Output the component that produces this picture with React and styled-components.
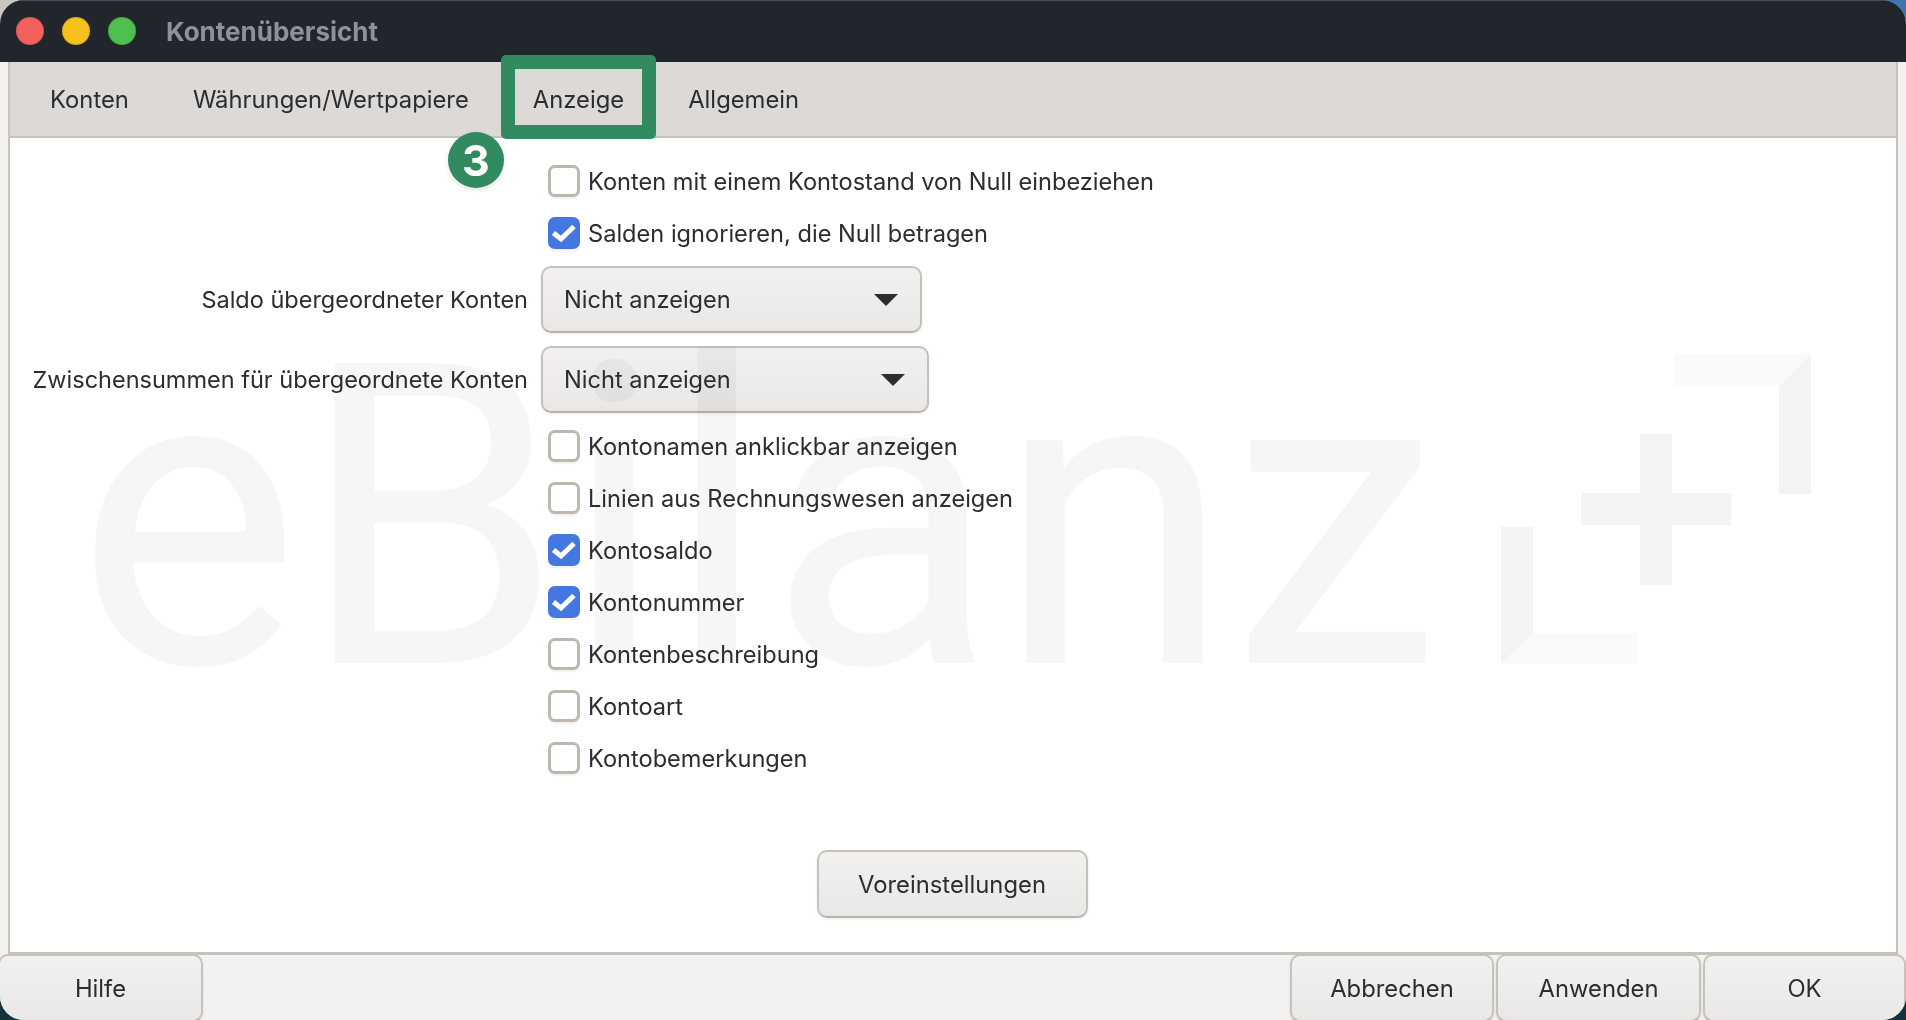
import React from "react";
import styled, { createGlobalStyle } from "styled-components";

const GlobalStyle = createGlobalStyle`
  html, body {
    margin: 0;
    padding: 0;
    background: #16323c;
    font-family: "Inter", "Liberation Sans", sans-serif;
    overflow: hidden;
  }
`;

const Desktop = styled.div`
  width: 1906px;
  height: 1020px;
  background:
    linear-gradient(to right, #c9c7c4 50%, #3d75b0 50%) top / 100% 50% no-repeat,
    #16323c;
`;

const Window = styled.div`
  display: flex;
  flex-direction: column;
  height: 100%;
  background: #f3f2f0;
  border-radius: 24px;
  overflow: hidden;
`;

const TitleBar = styled.div`
  display: flex;
  align-items: center;
  flex: 0 0 62px;
  padding-left: 16px;
  background: #20262b;
  box-shadow: inset 0 1px 0 #4a4f54;
`;

const Light = styled.span`
  width: 28px;
  height: 28px;
  margin-right: 18px;
  border-radius: 50%;
  background: ${p => p.color};
  box-shadow: inset 0 0 0 1px rgba(0, 0, 0, 0.12);
`;

const Title = styled.div`
  margin-left: 12px;
  font-size: 26px;
  font-weight: 700;
  color: #8e9195;
`;

const Panel = styled.div`
  position: relative;
  display: flex;
  flex-direction: column;
  flex: 0 0 893px;
  box-sizing: border-box;
  margin: 0 8px;
  background: #fff;
  border-bottom: 3px solid #c6c1ba;
  border-left: 2px solid #c6c1ba;
  border-right: 2px solid #c6c1ba;
`;

const TabBar = styled.div`
  display: flex;
  flex: 0 0 76px;
  box-sizing: border-box;
  padding-left: 8px;
  background: #dcd9d6;
  border-bottom: 2px solid #c6c1ba;
`;

const Tab = styled.div`
  position: relative;
  display: flex;
  align-items: center;
  padding: 0 32px;
  font-size: 23.8px;
  color: #2a2e30;
`;

const Highlight = styled.div`
  position: absolute;
  top: -7px;
  left: 0;
  right: 0;
  bottom: -3px;
  border: 14px solid #318a60;
  border-radius: 5px;
`;

const Badge = styled.div`
  position: absolute;
  top: 70px;
  left: -53px;
  display: flex;
  align-items: center;
  justify-content: center;
  width: 56px;
  height: 56px;
  border-radius: 50%;
  background: #318a60;
  box-shadow: 0 2px 4px rgba(0, 0, 0, 0.12);
  color: #fff;
  font-size: 43px;
  font-weight: 700;
`;

const Watermark = styled.div`
  position: absolute;
  top: 246px;
  left: 66px;
  font-family: "Roboto", sans-serif;
  font-size: 422px;
  font-weight: 400;
  line-height: 1;
  color: #f6f6f6;
  white-space: nowrap;
  user-select: none;
`;

const WatermarkMark = styled.svg`
  position: absolute;
  top: 288px;
  left: 1485px;
`;

const Form = styled.div`
  position: relative;
  display: flex;
  flex-direction: column;
  padding-top: 17px;
`;

const CheckRow = styled.label`
  display: flex;
  align-items: center;
  gap: 8px;
  height: 52px;
  margin-left: 538px;
  font-size: 23.6px;
  color: #2a2e30;
`;

const Box = styled.span`
  display: flex;
  align-items: center;
  justify-content: center;
  box-sizing: border-box;
  width: 32px;
  height: 32px;
  border: 3px solid ${p => (p.checked ? "#4477e0" : "#bdb7ae")};
  border-radius: 7px;
  background: ${p => (p.checked ? "#4477e0" : "#fff")};
  box-shadow: 0 2px 2px rgba(0, 0, 0, 0.06);
`;

const SelectRow = styled.div`
  display: grid;
  grid-template-columns: 518px auto;
  column-gap: 13px;
  justify-content: start;
  align-items: center;
  margin-top: ${p => p.gap}px;
  margin-bottom: ${p => p.after || 0}px;
`;

const SelectLabel = styled.div`
  font-size: 23.5px;
  color: #2a2e30;
  text-align: right;
`;

const SelectBox = styled.div`
  display: flex;
  align-items: center;
  justify-content: space-between;
  box-sizing: border-box;
  width: ${p => p.width}px;
  height: 67px;
  padding: 0 22px 0 21px;
  border: 2px solid #c6c1ba;
  border-bottom-color: #b9b3aa;
  border-radius: 10px;
  background: linear-gradient(#f2f1ef, #e9e8e6);
  box-shadow: 0 1px 3px rgba(0, 0, 0, 0.08);
  mix-blend-mode: multiply;
  font-size: 23.6px;
  color: #2a2e30;
`;

const Arrow = styled.span`
  width: 0;
  height: 0;
  border-left: 12px solid transparent;
  border-right: 12px solid transparent;
  border-top: 12px solid #2a2e30;
`;

const PresetRow = styled.div`
  display: flex;
  justify-content: center;
  margin-top: 66px;
  padding-right: 2px;
`;

const Button = styled.div`
  display: flex;
  align-items: center;
  justify-content: center;
  box-sizing: border-box;
  height: 68px;
  width: 271px;
  border: 2px solid #c6c1ba;
  border-bottom-color: #b9b3aa;
  border-radius: 10px;
  background: linear-gradient(#f2f1ef, #e9e8e6);
  box-shadow: 0 1px 3px rgba(0, 0, 0, 0.08);
  font-size: 23.8px;
  color: #2a2e30;
`;

const Footer = styled.div`
  display: flex;
  justify-content: space-between;
  flex: 1;
  margin-top: -1px;
`;

const FooterGroup = styled.div`
  display: flex;
  gap: 2px;
`;

const FooterButton = styled(Button)`
  width: ${p => p.width}px;
`;

const HelpButton = styled(FooterButton)`
  margin-left: -2px;
`;

function Check() {
  return (
    <svg width="24" height="18" viewBox="0 0 24 18" style={{ overflow: "visible" }}>
      <path d="M1.5 9 L9 15 L22 2.5" fill="none" stroke="#fff" strokeWidth="5" />
    </svg>
  );
}

function Checkbox({ checked, children }) {
  return (
    <CheckRow>
      <Box checked={checked}>{checked && <Check />}</Box>
      {children}
    </CheckRow>
  );
}

export default function App() {
  return (
    <Desktop>
      <GlobalStyle />
      <Window>
        <TitleBar>
          <Light color="#f4605c" />
          <Light color="#f5c21b" />
          <Light color="#4fbf4f" />
          <Title>Kontenübersicht</Title>
        </TitleBar>
        <Panel>
          <Watermark>eBilanz</Watermark>
          <WatermarkMark width="320" height="320" viewBox="1495 350 320 320">
            <path d="M1581 493H1640V434H1672V493H1731.5V525H1672V585H1640V525H1581Z" fill="#f3f3f3" />
            <path d="M1674 354H1811L1779 386H1674Z" fill="#fafafa" />
            <path d="M1811 354V494H1779V386Z" fill="#f3f3f3" />
            <path d="M1501 527H1533V633L1501 664Z" fill="#f3f3f3" />
            <path d="M1533 633H1638V664H1501Z" fill="#fafafa" />
          </WatermarkMark>
          <TabBar>
            <Tab>Konten</Tab>
            <Tab>Währungen/Wertpapiere</Tab>
            <Tab>
              Anzeige
              <Highlight />
              <Badge>3</Badge>
            </Tab>
            <Tab>Allgemein</Tab>
          </TabBar>
          <Form>
            <Checkbox>Konten mit einem Kontostand von Null einbeziehen</Checkbox>
            <Checkbox checked>Salden ignorieren, die Null betragen</Checkbox>
            <SelectRow gap={7}>
              <SelectLabel>Saldo übergeordneter Konten</SelectLabel>
              <SelectBox width={381}>Nicht anzeigen<Arrow /></SelectBox>
            </SelectRow>
            <SelectRow gap={13} after={7}>
              <SelectLabel>Zwischensummen für übergeordnete Konten</SelectLabel>
              <SelectBox width={388}>Nicht anzeigen<Arrow /></SelectBox>
            </SelectRow>
            <Checkbox>Kontonamen anklickbar anzeigen</Checkbox>
            <Checkbox>Linien aus Rechnungswesen anzeigen</Checkbox>
            <Checkbox checked>Kontosaldo</Checkbox>
            <Checkbox checked>Kontonummer</Checkbox>
            <Checkbox>Kontenbeschreibung</Checkbox>
            <Checkbox>Kontoart</Checkbox>
            <Checkbox>Kontobemerkungen</Checkbox>
            <PresetRow>
              <Button>Voreinstellungen</Button>
            </PresetRow>
          </Form>
        </Panel>
        <Footer>
          <HelpButton width={205}>Hilfe</HelpButton>
          <FooterGroup>
            <FooterButton width={204}>Abbrechen</FooterButton>
            <FooterButton width={205}>Anwenden</FooterButton>
            <FooterButton width={203}>OK</FooterButton>
          </FooterGroup>
        </Footer>
      </Window>
    </Desktop>
  );
}
